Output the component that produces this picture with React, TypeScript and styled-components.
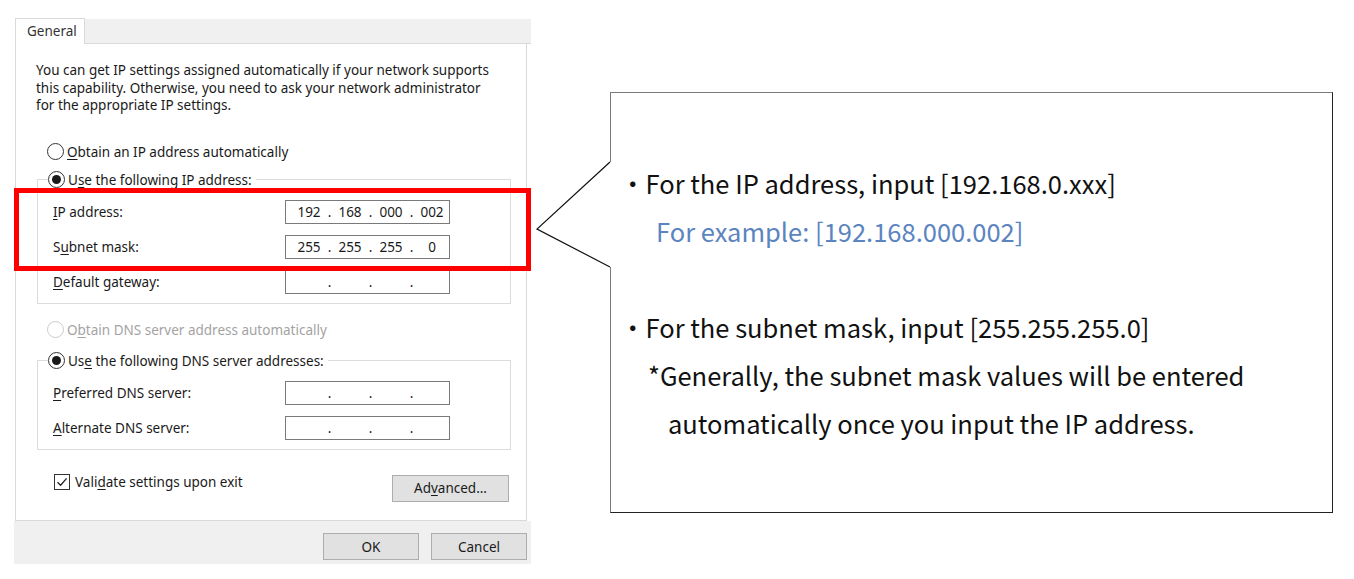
import React from 'react';
import styled, { createGlobalStyle } from 'styled-components';

const GlobalStyle = createGlobalStyle`
  body {
    margin: 0;
    background: #ffffff;
  }
`;

interface Octets {
  values: string[];
}

const IpField: React.FC<Octets> = ({ values }) => (
  <IpBox>
    {values.map((v, i) => (
      <React.Fragment key={i}>
        <Octet>{v}</Octet>
        {i < 3 && <Dot>.</Dot>}
      </React.Fragment>
    ))}
  </IpBox>
);

const Radio: React.FC<{ checked?: boolean; disabled?: boolean }> = ({
  checked,
  disabled,
}) => (
  <RadioCircle $disabled={disabled}>{checked && <RadioDot />}</RadioCircle>
);

const App: React.FC = () => {
  return (
    <>
      <GlobalStyle />
      <Page>
        <Dialog>
          <TabStrip>
            <Tab>General</Tab>
            <TabFill />
          </TabStrip>
          <Panel>
            <Intro>
              You can get IP settings assigned automatically if your network supports
              <br />
              this capability. Otherwise, you need to ask your network administrator
              <br />
              for the appropriate IP settings.
            </Intro>
            <RadioRow $top={27}>
              <Radio />
              <span>
                <Key>O</Key>btain an IP address automatically
              </span>
            </RadioRow>
            <Group $top={9}>
              <Legend>
                <Radio checked />
                <span>
                  U<Key>s</Key>e the following IP address:
                </span>
              </Legend>
              <FieldRow>
                <Label>
                  <Key>I</Key>P address:
                </Label>
                <IpField values={['192', '168', '000', '002']} />
              </FieldRow>
              <FieldRow>
                <Label>
                  S<Key>u</Key>bnet mask:
                </Label>
                <IpField values={['255', '255', '255', '0']} />
              </FieldRow>
              <FieldRow>
                <Label>
                  <Key>D</Key>efault gateway:
                </Label>
                <IpField values={['', '', '', '']} />
              </FieldRow>
            </Group>
            <RadioRow $top={16} $disabled>
              <Radio disabled />
              <span>
                O<Key>b</Key>tain DNS server address automatically
              </span>
            </RadioRow>
            <Group $top={12}>
              <Legend>
                <Radio checked />
                <span>
                  Us<Key>e</Key> the following DNS server addresses:
                </span>
              </Legend>
              <FieldRow>
                <Label>
                  <Key>P</Key>referred DNS server:
                </Label>
                <IpField values={['', '', '', '']} />
              </FieldRow>
              <FieldRow>
                <Label>
                  <Key>A</Key>lternate DNS server:
                </Label>
                <IpField values={['', '', '', '']} />
              </FieldRow>
            </Group>
            <BottomRow>
              <CheckRow>
                <CheckBox>
                  <svg width="14" height="14" viewBox="0 0 14 14">
                    <path
                      d="M2.5 7.2 L5.6 10.2 L11.6 3.4"
                      fill="none"
                      stroke="#222"
                      strokeWidth="1.3"
                    />
                  </svg>
                </CheckBox>
                <span>
                  Vali<Key>d</Key>ate settings upon exit
                </span>
              </CheckRow>
              <WinButton $width={117}>
                Ad<Key>v</Key>anced...
              </WinButton>
            </BottomRow>
          </Panel>
          <Footer>
            <WinButton $width={96}>OK</WinButton>
            <WinButton $width={96}>Cancel</WinButton>
          </Footer>
          <Highlight />
        </Dialog>

        <Callout>
          <Pointer width="77" height="108" viewBox="0 0 77 108">
            <polygon points="75,1 2,68 75,106 77,106 77,1" fill="#ffffff" />
            <polyline
              points="75,1 2,68 75,106"
              fill="none"
              stroke="#111"
              strokeWidth="1.2"
            />
          </Pointer>
          <Line $indent={0}>・For the IP address, input [192.168.0.xxx]</Line>
          <Line $indent={36} $blue>
            For example: [192.168.000.002]
          </Line>
          <Line $indent={0}>&nbsp;</Line>
          <Line $indent={0}>・For the subnet mask, input [255.255.255.0]</Line>
          <Line $indent={28}>*Generally, the subnet mask values will be entered</Line>
          <Line $indent={48}>automatically once you input the IP address.</Line>
        </Callout>
      </Page>
    </>
  );
};

const Page = styled.div`
  width: 1354px;
  height: 579px;
  box-sizing: border-box;
  padding: 18px 0 0 14px;
  display: flex;
  align-items: flex-start;
  overflow: hidden;
`;

const Dialog = styled.div`
  position: relative;
  width: 517px;
  display: flex;
  flex-direction: column;
  font-family: 'Noto Sans', 'Open Sans', sans-serif;
  font-size: 13.5px;
  color: #1a1a1a;
`;

const TabStrip = styled.div`
  display: flex;
  height: 26px;
  margin-left: 1px;
`;

const Tab = styled.div`
  width: 70px;
  box-sizing: border-box;
  padding: 3px 0 0 11px;
  background: #ffffff;
  border: 1px solid #d9d9d9;
  border-bottom: none;
  color: #333333;
`;

const TabFill = styled.div`
  flex: 1;
  margin-top: 1px;
  background: #f0f0f0;
  border-bottom: 1px solid #d9d9d9;
`;

const Panel = styled.div`
  height: 477px;
  box-sizing: border-box;
  margin: 0 4px 0 1px;
  padding: 18px 0 0 20px;
  background: #ffffff;
  border: 1px solid #d9d9d9;
  border-top: none;
`;

const Intro = styled.p`
  margin: 0;
  width: 480px;
  line-height: 17.5px;
  white-space: nowrap;
`;

const Key = styled.u`
  text-decoration-thickness: 1px;
  text-underline-offset: 2px;
`;

const RadioRow = styled.div<{ $top: number; $disabled?: boolean }>`
  display: flex;
  align-items: center;
  gap: 3px;
  height: 20px;
  margin: ${({ $top }) => $top}px 0 0 11px;
  color: ${({ $disabled }) => ($disabled ? '#a3a3a3' : '#1a1a1a')};
`;

const RadioCircle = styled.span<{ $disabled?: boolean }>`
  width: 17px;
  height: 17px;
  box-sizing: border-box;
  border-radius: 50%;
  border: 1px solid ${({ $disabled }) => ($disabled ? '#cccccc' : '#333333')};
  display: flex;
  align-items: center;
  justify-content: center;
  flex-shrink: 0;
`;

const RadioDot = styled.span`
  width: 9px;
  height: 9px;
  border-radius: 50%;
  background: #1a1a1a;
`;

const Group = styled.fieldset<{ $top: number }>`
  margin: ${({ $top }) => $top - 1}px 0 0 1px;
  width: 474px;
  box-sizing: border-box;
  padding: 10px 0 9px 15px;
  border: 1px solid #dcdcdc;
  display: flex;
  flex-direction: column;
  gap: 11px;
  min-width: 0;
`;

const Legend = styled.legend`
  display: flex;
  align-items: center;
  gap: 3px;
  height: 20px;
  padding: 0 4px 0 0;
  margin-left: -5px;
`;

const FieldRow = styled.div`
  display: grid;
  grid-template-columns: 232px 165px;
  align-items: center;
  height: 24px;
`;

const Label = styled.span``;

const IpBox = styled.div`
  height: 24px;
  box-sizing: border-box;
  border: 1px solid #7a7a7a;
  padding-left: 9px;
  display: grid;
  grid-template-columns: 28px 13px 28px 13px 28px 13px 28px;
  align-items: center;
  text-align: center;
  line-height: 20px;
`;

const Octet = styled.span``;

const Dot = styled.span``;

const BottomRow = styled.div`
  display: flex;
  justify-content: space-between;
  align-items: flex-start;
  width: 472px;
  margin: 22px 0 0 1px;
`;

const CheckRow = styled.div`
  display: flex;
  align-items: center;
  gap: 5px;
  height: 20px;
  padding-left: 17px;
  margin-top: 0;
`;

const CheckBox = styled.span`
  width: 16px;
  height: 16px;
  box-sizing: border-box;
  border: 1px solid #333333;
  display: flex;
  align-items: center;
  justify-content: center;
`;

const WinButton = styled.div<{ $width: number }>`
  width: ${({ $width }) => $width}px;
  height: 27px;
  box-sizing: border-box;
  margin-top: 3px;
  background: #e1e1e1;
  border: 1px solid #adadad;
  display: flex;
  align-items: center;
  justify-content: center;
`;

const Footer = styled.div`
  height: 43px;
  box-sizing: border-box;
  padding: 9px 4px 0 0;
  background: #f0f0f0;
  display: flex;
  justify-content: flex-end;
  gap: 12px;
`;

const Highlight = styled.div`
  position: absolute;
  left: 0;
  top: 170px;
  width: 517px;
  height: 83px;
  box-sizing: border-box;
  border: 5px solid #ff0000;
  pointer-events: none;
`;

const Callout = styled.div`
  position: relative;
  margin: 74px 0 0 79px;
  width: 723px;
  height: 421px;
  box-sizing: border-box;
  padding: 66px 0 0 9px;
  border: 1px solid #222222;
  border-top-color: #7a7a7a;
  border-left-color: #7a7a7a;
  font-family: 'Noto Sans CJK JP', 'Liberation Sans', sans-serif;
  font-size: 25.5px;
  color: #111111;
`;

const Pointer = styled.svg`
  position: absolute;
  left: -76px;
  top: 68px;
`;

const Line = styled.div<{ $indent: number; $blue?: boolean }>`
  height: 48px;
  line-height: 48px;
  padding-left: ${({ $indent }) => $indent}px;
  color: ${({ $blue }) => ($blue ? '#5b84c0' : '#111111')};
  white-space: pre;
`;

export default App;
